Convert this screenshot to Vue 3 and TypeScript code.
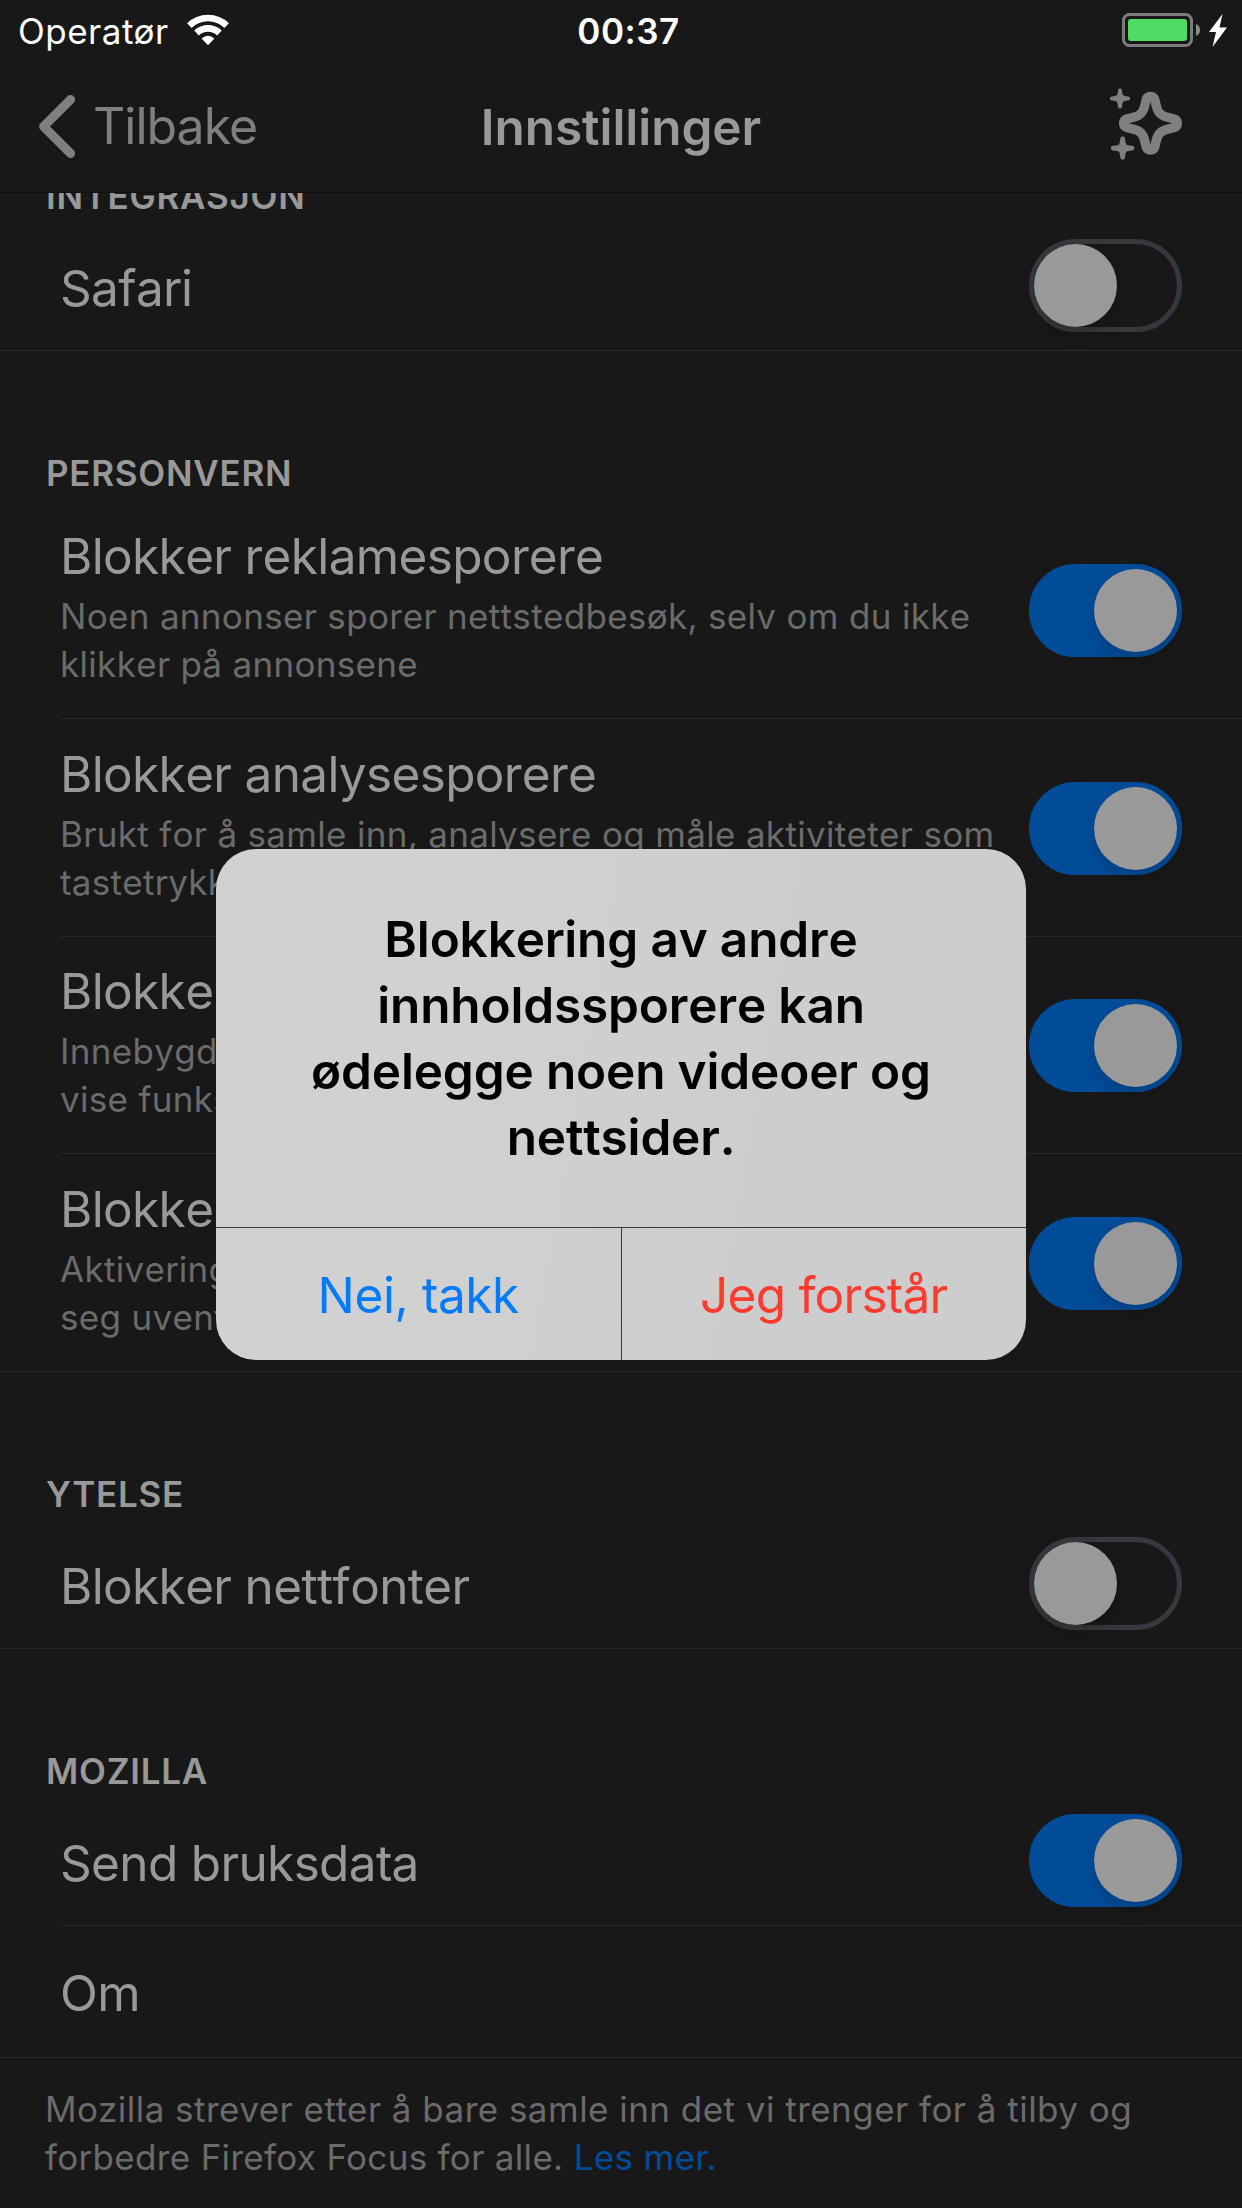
<script setup lang="ts">
interface Row {
  label: string
  detail?: string[]
  on?: boolean
}

interface Section {
  title: string
  kind: string
  rows: Row[]
}

const sections: Section[] = [
  {
    title: 'INTEGRASJON',
    kind: 'clipped',
    rows: [{ label: 'Safari', on: false }],
  },
  {
    title: 'PERSONVERN',
    kind: 'detailed',
    rows: [
      {
        label: 'Blokker reklamesporere',
        detail: ['Noen annonser sporer nettstedbesøk, selv om du ikke', 'klikker på annonsene'],
        on: true,
      },
      {
        label: 'Blokker analysesporere',
        detail: ['Brukt for å samle inn, analysere og måle aktiviteter som', 'tastetrykk og rulling'],
        on: true,
      },
      {
        label: 'Blokker sosiale sporere',
        detail: ['Innebygd på nettsteder for å spore besøk og', 'vise funksjoner som deleknapper'],
        on: true,
      },
      {
        label: 'Blokker andre sporere',
        detail: ['Aktivering kan føre til at noen sider oppfører', 'seg uventet'],
        on: true,
      },
    ],
  },
  {
    title: 'YTELSE',
    kind: 'plain',
    rows: [{ label: 'Blokker nettfonter', on: false }],
  },
  {
    title: 'MOZILLA',
    kind: 'plain',
    rows: [{ label: 'Send bruksdata', on: true }, { label: 'Om' }],
  },
]

const alertLines: string[] = [
  'Blokkering av andre',
  'innholdssporere kan',
  'ødelegge noen videoer og',
  'nettsider.',
]
</script>

<template>
  <div class="screen">
    <header class="top">
      <div class="status">
        <div class="carrier">
          <span class="carrier-name">Operatør</span>
          <svg class="wifi" width="44" height="32" viewBox="185 14 44 32" fill="none">
            <path d="M188.4 25.6A26.6 26.6 0 0 1 225.6 25.6" stroke="#fff" stroke-width="6.6" />
            <path d="M195.5 33A16.6 16.6 0 0 1 218.5 33" stroke="#fff" stroke-width="6.6" />
            <path d="M200.6 38.6Q207 33 213.4 38.6L208 44.2Q207 45.2 206 44.2Z" fill="#fff" />
          </svg>
        </div>
        <span class="time">00:37</span>
        <svg class="battery" width="107" height="36" viewBox="1121 12 107 36" fill="none">
          <rect x="1123.5" y="14.5" width="68" height="31" rx="6" stroke="#7b7b7b" stroke-width="3" />
          <rect x="1128" y="19" width="59" height="22" rx="3" fill="#4fdc65" />
          <path d="M1196 24Q1200 25.500 1200 30T1196 36Z" fill="#8b8b8b" />
          <path d="M1222.500 14L1209 32H1216L1212.500 47L1227 27.500H1219.500Z" fill="#fff" />
        </svg>
      </div>
      <nav class="nav">
        <div class="back">
          <svg width="38" height="64" viewBox="38 94 38 64" fill="none">
            <path
              d="M70.600 99.500L43.600 126.500L70.600 153.500"
              stroke="#7f7f7f"
              stroke-width="9"
              stroke-linecap="round"
              stroke-linejoin="round"
            />
          </svg>
          <span class="back-label">Tilbake</span>
        </div>
        <h1 class="title">Innstillinger</h1>
        <svg class="sparkle" width="72" height="74" viewBox="330 262 216 222" fill="#7f7f7f">
          <path
            transform="translate(451.5 370.5)"
            fill-rule="evenodd"
            d="M0-94.500C14-94.500 24-86 27-72C31-55 34-43 39-39C43-34 55-31 72-27C86-24 94.500-14 94.500 0C94.500 14 86 24 72 27C55 31 43 34 39 39C34 43 31 55 27 72C24 86 14 94.500 0 94.500C-14 94.500-24 86-27 72C-31 55-34 43-39 39C-43 34-55 31-72 27C-86 24-94.500 14-94.500 0C-94.500-14-86-24-72-27C-55-31-43-34-39-39C-34-43-31-55-27-72C-24-86-14-94.500 0-94.500Z
               M0-65C-5-40-10-28-19-19C-28-10-40-5-65 0C-40 5-28 10-19 19C-10 28-5 40 0 65C5 40 10 28 19 19C28 10 40 5 65 0C40-5 28-10 19-19C10-28 5-40 0-65Z"
          />
          <path
            v-for="star in [{ x: 360, y: 296.500, s: 0.860 }, { x: 368, y: 445.500, s: 1 }]"
            :key="star.y"
            :transform="`translate(${star.x} ${star.y}) scale(${star.s})`"
            d="M0-35C4-35 6-33 7-29C8-17 10-12 11-11C12-10 17-8 29-7C33-6 35-4 35 0C35 4 33 6 29 7C17 8 12 10 11 11C10 12 8 17 7 29C6 33 4 35 0 35C-4 35-6 33-7 29C-8 17-10 12-11 11C-12 10-17 8-29 7C-33 6-35 4-35 0C-35-4-33-6-29-7C-17-8-12-10-11-11C-10-12-8-17-7-29C-6-33-4-35 0-35Z"
          />
        </svg>
      </nav>
    </header>

    <main class="list">
      <section v-for="section in sections" :key="section.title" :class="['section', section.kind]">
        <h2 class="section-title">{{ section.title }}</h2>
        <div class="rows">
          <div v-for="row in section.rows" :key="row.label" class="row">
            <div :class="['texts', { lone: row.on === undefined }]">
              <div class="label">{{ row.label }}</div>
              <div v-if="row.detail" class="detail">
                <div v-for="line in row.detail" :key="line">{{ line }}</div>
              </div>
            </div>
            <div v-if="row.on !== undefined" :class="['toggle', { on: row.on }]">
              <div class="thumb"></div>
            </div>
          </div>
        </div>
      </section>
      <footer class="note">
        <div>Mozilla strever etter å bare samle inn det vi trenger for å tilby og</div>
        <div class="note-end">forbedre Firefox Focus for alle. <a class="link">Les mer.</a></div>
      </footer>
    </main>

    <div class="alert" role="alertdialog">
      <div class="message">
        <div v-for="line in alertLines" :key="line">{{ line }}</div>
      </div>
      <div class="actions">
        <button class="action cancel">Nei, takk</button>
        <button class="action confirm">Jeg forstår</button>
      </div>
    </div>
  </div>
</template>

<style>
body {
  margin: 0;
  background: #181818;
}
</style>

<style scoped>
.screen {
  position: relative;
  width: 1242px;
  height: 2208px;
  overflow: hidden;
  display: flex;
  flex-direction: column;
  background: #181818;
  color: #999;
  font-family: Inter, "Liberation Sans", sans-serif;
  white-space: nowrap;
}

.top {
  flex: none;
  box-sizing: border-box;
  height: 193px;
  border-bottom: 1px solid #101010;
}

.status {
  display: grid;
  grid-template-columns: 1fr auto 1fr;
  align-items: start;
  height: 60px;
  padding: 0 14px 0 18px;
  color: #fff;
  font-size: 35px;
  line-height: 62px;
}

.carrier {
  display: flex;
  gap: 17px;
}

.carrier-name {
  letter-spacing: 0.5px;
}

.wifi {
  margin-top: 14px;
}

.time {
  margin-left: 11px;
  font-weight: 600;
  letter-spacing: 0.5px;
}

.battery {
  justify-self: end;
  margin-top: 12px;
}

.nav {
  display: grid;
  grid-template-columns: 1fr auto 1fr;
  align-items: start;
  height: 132px;
  padding: 0 60px;
}

.back {
  display: flex;
  gap: 17px;
  margin-left: -22px;
  padding-top: 34px;
  color: #7f7f7f;
}

.back-label {
  font-size: 50px;
  line-height: 60px;
  padding-top: 2px;
  letter-spacing: -1px;
}

.title {
  margin: 37px 0 0;
  font-size: 49.5px;
  line-height: 60px;
  font-weight: 600;
  letter-spacing: -0.05px;
}

.sparkle {
  justify-self: end;
  margin-top: 27px;
}

.list {
  flex: 1;
}

.section-title {
  box-sizing: border-box;
  height: 145px;
  margin: 0;
  padding: 98px 0 0 46px;
  font-size: 35px;
  line-height: 48px;
  font-weight: 600;
  letter-spacing: 0.75px;
}

.clipped .section-title {
  display: flex;
  align-items: flex-end;
  height: 26px;
  padding-top: 0;
  line-height: 45px;
  overflow: hidden;
}

.row {
  box-sizing: border-box;
  display: flex;
  justify-content: space-between;
  height: 132px;
  margin-left: 60px;
  padding: 20px 60px 0 0;
  border-bottom: 1px solid #272727;
}

.row:last-child {
  margin-left: 0;
  padding-left: 60px;
}

.texts {
  padding-top: 19px;
}

.texts.lone {
  padding-top: 17px;
}

.label {
  font-size: 49.5px;
  line-height: 60px;
  font-kerning: none;
  letter-spacing: -0.65px;
}

.detailed .rows {
  padding-top: 5.33px;
}

.detailed .row {
  height: 217.67px;
  padding-top: 24.67px;
}

.detailed .texts {
  padding-top: 0;
}

.detail {
  margin-top: 6px;
  color: #6b6b6b;
  font-size: 35px;
  line-height: 48px;
  font-kerning: none;
  letter-spacing: 0.32px;
}

.toggle {
  flex: none;
  box-sizing: border-box;
  display: flex;
  align-items: center;
  width: 153px;
  height: 93px;
  border: 5px solid #35383c;
  border-radius: 47px;
}

.detailed .toggle {
  margin-top: 38px;
}

.toggle.on {
  justify-content: flex-end;
  border-color: #004c99;
  background: #004c99;
}

.thumb {
  width: 83px;
  height: 83px;
  border-radius: 50%;
  background: #999;
  box-shadow: 0 8px 16px rgba(0, 0, 0, 0.16);
}

.note {
  padding: 27px 0 0 45px;
  color: #6b6b6b;
  font-size: 35px;
  line-height: 48px;
  letter-spacing: 0.47px;
}

.note-end {
  letter-spacing: 0.32px;
}

.link {
  color: #004c99;
}

.alert {
  position: absolute;
  left: 216px;
  top: 849px;
  width: 810px;
  height: 511px;
  overflow: hidden;
  border-radius: 40px;
  display: flex;
  flex-direction: column;
  background: linear-gradient(100deg, #d1d1d1 30%, #cdcdcd 70%);
}

.message {
  flex: 1;
  padding-top: 57px;
  color: #000;
  font-size: 49.5px;
  line-height: 66px;
  font-weight: 600;
  font-kerning: none;
  text-align: center;
  letter-spacing: -0.15px;
}

.actions {
  display: flex;
  height: 132px;
  border-top: 1px solid #3a3a3a;
}

.action {
  flex: 1;
  margin: 0;
  padding: 2px 0 0;
  border: 0;
  background: none;
  font: inherit;
  font-size: 49.5px;
  line-height: 60px;
}

.cancel {
  border-right: 1px solid #3a3a3a;
  color: #007aff;
  letter-spacing: -0.4px;
}

.confirm {
  color: #ff3b30;
  letter-spacing: -0.75px;
}
</style>
